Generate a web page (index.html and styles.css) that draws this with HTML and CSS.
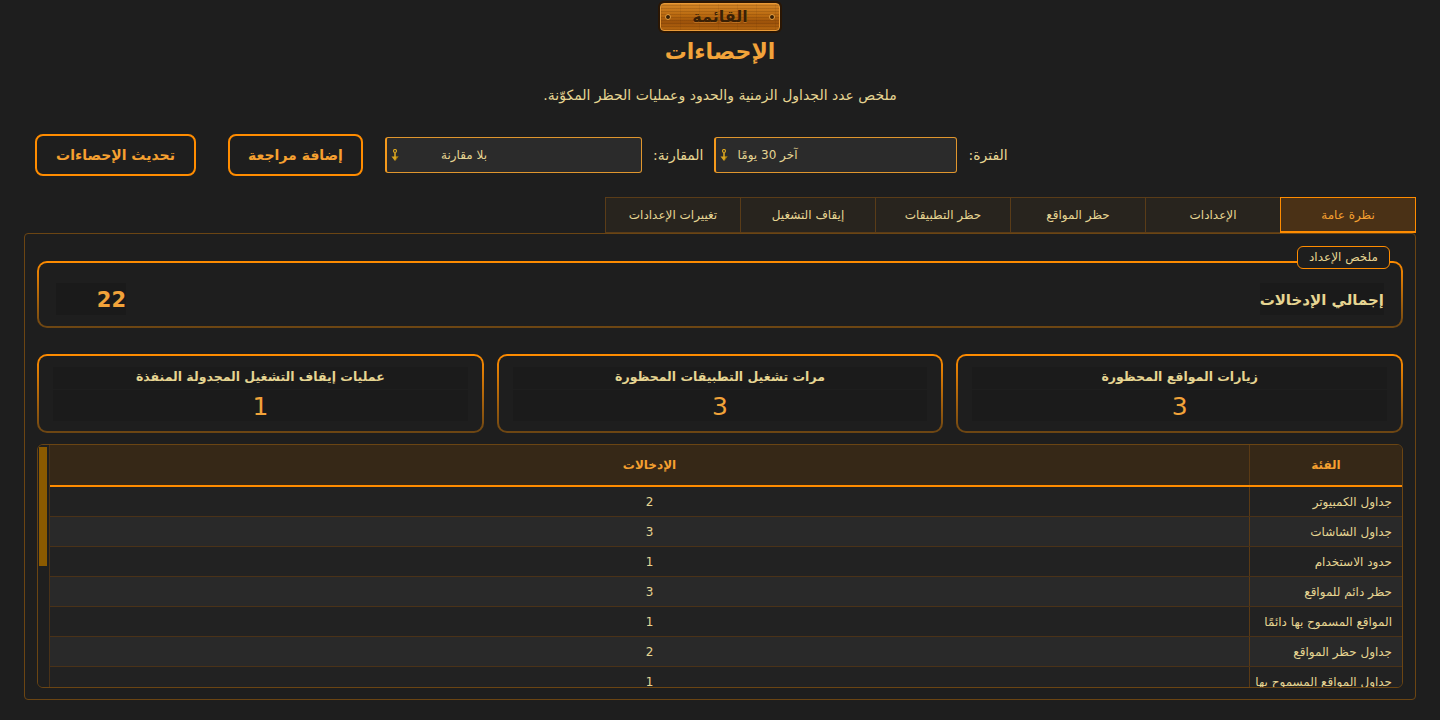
FILE: index.html
```html
<!DOCTYPE html>
<html lang="ar" dir="rtl">
<head>
<meta charset="utf-8">
<title>الإحصاءات</title>
<link rel="stylesheet" href="styles.css">
</head>
<body>
<div class="page">
  <header class="header">
    <button class="menu-btn"><span class="rivet"></span><span class="menu-label">القائمة</span><span class="rivet"></span></button>
    <h1 class="title">الإحصاءات</h1>
    <p class="subtitle">ملخص عدد الجداول الزمنية والحدود وعمليات الحظر المكوّنة.</p>
  </header>

  <div class="controls">
    <span class="ctl-label gap-11">الفترة:</span>
    <div class="select sel-period gap-11">
      <span class="sel-value">آخر 30 يومًا</span>
      <svg class="sel-arrow" width="8" height="13" viewBox="0 0 8 13"><circle cx="4" cy="2" r="1.5" fill="none" stroke="#d9a520" stroke-width="1.2"/><rect x="3.2" y="3.4" width="1.6" height="4.6" fill="#d9a520"/><path d="M0.5 7.5 H7.5 L4 12 Z" fill="#d9a520"/><path d="M4 12 L7.5 7.5 H6 Z" fill="#8a6200"/></svg>
    </div>
    <span class="ctl-label gap-11">المقارنة:</span>
    <div class="select sel-compare gap-22">
      <span class="sel-value">بلا مقارنة</span>
      <svg class="sel-arrow" width="8" height="13" viewBox="0 0 8 13"><circle cx="4" cy="2" r="1.5" fill="none" stroke="#d9a520" stroke-width="1.2"/><rect x="3.2" y="3.4" width="1.6" height="4.6" fill="#d9a520"/><path d="M0.5 7.5 H7.5 L4 12 Z" fill="#d9a520"/><path d="M4 12 L7.5 7.5 H6 Z" fill="#8a6200"/></svg>
    </div>
    <button class="btn btn-add gap-32">إضافة مراجعة</button>
    <button class="btn btn-refresh">تحديث الإحصاءات</button>
  </div>

  <nav class="tabs">
    <div class="tab active">نظرة عامة</div>
    <div class="tab">الإعدادات</div>
    <div class="tab">حظر المواقع</div>
    <div class="tab">حظر التطبيقات</div>
    <div class="tab">إيقاف التشغيل</div>
    <div class="tab">تغييرات الإعدادات</div>
  </nav>

  <section class="panel">
    <div class="summary-wrap">
      <div class="summary-box">
        <div class="summary-label">إجمالي الإدخالات</div>
        <div class="summary-value">22</div>
      </div>
      <div class="chip">ملخص الإعداد</div>
    </div>

    <div class="cards">
      <div class="card">
        <div class="card-title">زيارات المواقع المحظورة</div>
        <div class="card-value">3</div>
      </div>
      <div class="card">
        <div class="card-title">مرات تشغيل التطبيقات المحظورة</div>
        <div class="card-value">3</div>
      </div>
      <div class="card">
        <div class="card-title">عمليات إيقاف التشغيل المجدولة المنفذة</div>
        <div class="card-value">1</div>
      </div>
    </div>

    <div class="table">
      <div class="tbl-main">
        <div class="tbl-head">
          <div class="th th-cat">الفئة</div>
          <div class="th">الإدخالات</div>
        </div>
        <div class="tr"><div class="td td-cat">جداول الكمبيوتر</div><div class="td td-num">2</div></div>
        <div class="tr alt"><div class="td td-cat">جداول الشاشات</div><div class="td td-num">3</div></div>
        <div class="tr"><div class="td td-cat">حدود الاستخدام</div><div class="td td-num">1</div></div>
        <div class="tr alt"><div class="td td-cat">حظر دائم للمواقع</div><div class="td td-num">3</div></div>
        <div class="tr"><div class="td td-cat">المواقع المسموح بها دائمًا</div><div class="td td-num">1</div></div>
        <div class="tr alt"><div class="td td-cat">جداول حظر المواقع</div><div class="td td-num">2</div></div>
        <div class="tr"><div class="td td-cat">جداول المواقع المسموح بها</div><div class="td td-num">1</div></div>
      </div>
      <div class="scrollbar"><div class="handle"></div></div>
    </div>
  </section>
</div>
</body>
</html>
```

FILE: styles.css
```css
* { box-sizing: border-box; }

html, body {
  margin: 0;
  padding: 0;
  background: #1e1e1e;
  height: 720px;
  overflow: hidden;
}

body {
  font-family: "DejaVu Sans", "Noto Sans", sans-serif;
  color: #e6d592;
}

.page {
  padding: 0 24px;
}

/* Header */
.header {
  display: flex;
  flex-direction: column;
  align-items: center;
  padding-top: 3px;
}

.menu-btn {
  width: 120px;
  height: 28px;
  border: 1px solid #e89a38;
  border-radius: 4px;
  box-shadow: 0 0 0 2px #2a1604;
  background:
    repeating-linear-gradient(0deg, rgba(60, 25, 0, 0.16) 0 1px, transparent 1px 3px),
    repeating-linear-gradient(90deg, rgba(60, 25, 0, 0.07) 0 1px, transparent 1px 19px),
    linear-gradient(#d48626, #b8680f 45%, #9c520a 70%, #b5660f);
  display: flex;
  align-items: center;
  justify-content: space-between;
  padding: 0 4px;
  font-family: "DejaVu Sans", sans-serif;
  font-size: 16px;
  font-weight: bold;
  color: #3a2005;
  cursor: pointer;
}

.menu-label {
  text-shadow: 0 1px 0 rgba(230, 150, 60, 0.45);
  line-height: 26px;
}

.rivet {
  width: 6px;
  height: 6px;
  border-radius: 50%;
  background: #3a2005;
  border: 1px solid #e8a040;
}

.title {
  margin: 4px 0 0;
  height: 34px;
  line-height: 34px;
  font-size: 22px;
  font-weight: bold;
  color: #f2a33a;
}

.subtitle {
  margin: 16px 0 0;
  height: 20px;
  line-height: 20px;
  font-size: 14px;
  color: #e6d592;
}

/* Controls */
.controls {
  display: flex;
  justify-content: flex-end;
  align-items: center;
  height: 42px;
  margin-top: 29px;
  padding: 0 11px;
}

.gap-11 { margin-left: 11px; }
.gap-22 { margin-left: 22px; }
.gap-32 { margin-left: 32px; }

.ctl-label {
  font-size: 14px;
  color: #e6d592;
}

.select {
  display: flex;
  align-items: center;
  height: 36px;
  background: #2b2b2b;
  border: 1px solid #e0962e;
  border-left: 2px solid #f59a1c;
  border-radius: 3px;
  padding-left: 4px;
}

.sel-period { width: 243px; padding-right: 159px; }
.sel-compare { width: 257px; padding-right: 154px; }

.sel-value {
  font-size: 12px;
  color: #e6d592;
  white-space: nowrap;
}

.sel-arrow {
  margin-right: auto;
  display: block;
}

.btn {
  height: 42px;
  border: 2px solid #ff8c00;
  border-radius: 8px;
  background: transparent;
  font-family: "DejaVu Sans", sans-serif;
  font-size: 14px;
  font-weight: bold;
  color: #f5a030;
  cursor: pointer;
}

.btn-add { width: 135px; }
.btn-refresh { width: 161px; }

/* Tabs */
.tabs {
  display: flex;
  margin-top: 21px;
  height: 36px;
}

.tab {
  width: 136px;
  height: 36px;
  margin-left: -1px;
  border: 1px solid #5a3c18;
  background: #28241e;
  display: flex;
  align-items: center;
  justify-content: center;
  font-size: 12px;
  color: #e6d592;
}

.tab.active {
  position: relative;
  z-index: 1;
  background: #4a3116;
  border: 1px solid #ff8c00;
  border-bottom: 2px solid #ff8c00;
  color: #f5a030;
}

/* Panel */
.panel {
  border: 1px solid #6b4513;
  border-radius: 4px;
  padding: 12px 12px 11px;
}

.summary-wrap {
  position: relative;
  padding-top: 15px;
}

.summary-box,
.card {
  border: 2px solid transparent;
  border-radius: 10px;
  background:
    linear-gradient(#1e1e1e, #1e1e1e) padding-box,
    linear-gradient(to bottom, #ff8c00, #6b4513) border-box;
}

.summary-box {
  height: 67px;
  display: flex;
  align-items: center;
  justify-content: space-between;
  padding: 9px 17px 0;
}

.summary-label {
  height: 32px;
  line-height: 34px;
  background: #1a1a1a;
  font-size: 15px;
  font-weight: bold;
  color: #e6d592;
}

.summary-value {
  width: 70px;
  height: 32px;
  line-height: 34px;
  background: #1a1a1a;
  font-size: 21px;
  font-weight: bold;
  color: #f2a33a;
}

.chip {
  position: absolute;
  top: 0;
  right: 13px;
  height: 23px;
  width: 93px;
  line-height: 21px;
  text-align: center;
  border: 1px solid #ff8c00;
  border-radius: 6px;
  background: #1e1e1e;
  font-size: 12px;
  color: #e6d592;
}

/* Cards */
.cards {
  display: grid;
  grid-template-columns: repeat(3, 1fr);
  gap: 13px;
  margin-top: 26px;
}

.card {
  height: 79px;
  padding: 11px 14px 10px;
  display: flex;
  flex-direction: column;
  gap: 1px;
}

.card-title {
  height: 22px;
  line-height: 20px;
  background: #1b1b1b;
  text-align: center;
  font-size: 12.5px;
  font-weight: bold;
  color: #e6d592;
}

.card-value {
  height: 31px;
  line-height: 33px;
  background: #1b1b1b;
  text-align: center;
  font-size: 25px;
  color: #f2a33a;
}

/* Table */
.table {
  margin-top: 11px;
  height: 244px;
  border: 1px solid #6b4513;
  border-radius: 6px;
  overflow: hidden;
  display: flex;
}

.tbl-main {
  flex: 1;
  overflow: hidden;
}

.tbl-head {
  display: flex;
  height: 42px;
  background: #362817;
  border-bottom: 2px solid #ff8c00;
}

.th {
  flex: 1;
  display: flex;
  align-items: center;
  justify-content: center;
  font-size: 12px;
  font-weight: bold;
  color: #f5a030;
}

.th-cat,
.td-cat {
  flex: 0 0 153px;
  border-left: 1px solid #5a3a15;
}

.tr {
  display: flex;
  height: 30px;
  background: #222222;
  border-bottom: 1px solid #4a3218;
}

.tr.alt { background: #292929; }

.td {
  display: flex;
  align-items: center;
  font-size: 12px;
  color: #e6d592;
  white-space: nowrap;
}

.td-cat {
  padding-right: 10px;
}

.td-num {
  flex: 1;
  justify-content: center;
}

.scrollbar {
  width: 12px;
  background: #1f1f1f;
  border-right: 1px solid #4a3218;
  padding: 2px 2px 0 1px;
}

.handle {
  width: 8px;
  height: 119px;
  background: #8b5a00;
}
```
